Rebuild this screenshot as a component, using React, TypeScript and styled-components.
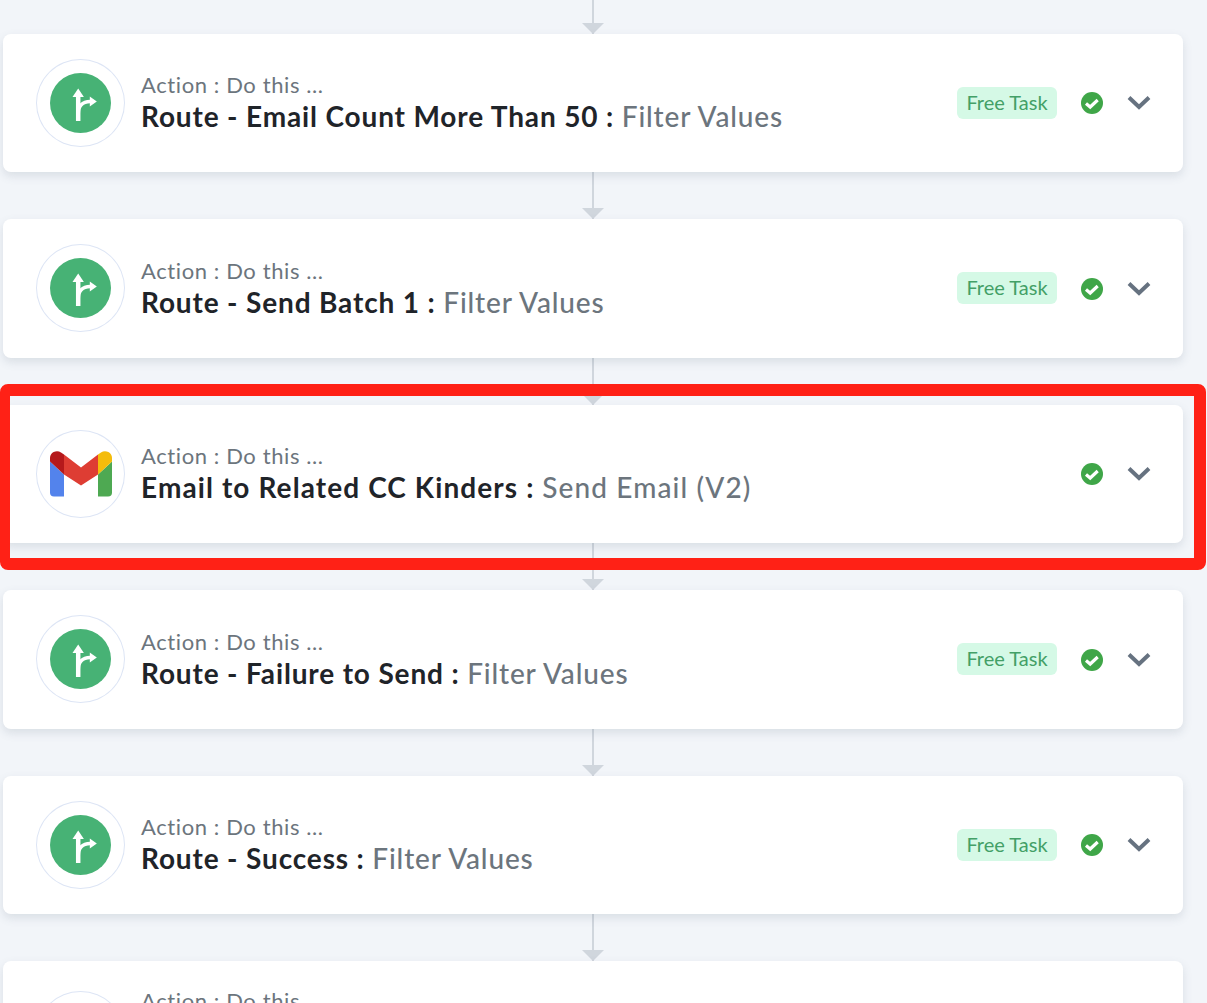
import React from 'react';
import styled, { createGlobalStyle } from 'styled-components';

const GlobalStyle = createGlobalStyle`
    html, body {
        margin: 0;
        padding: 0;
        height: 100%;
        overflow: hidden;
        background-color: #f2f5f9;
        font-family: Lato, "Open Sans", sans-serif;
    }
`;

const Page = styled.div`
    position: relative;
    height: 1003px;
    overflow: hidden;
    padding-left: 3px;
    padding-right: 24px;
`;

const Flow = styled.div`
    display: flex;
    flex-direction: column;
`;

const Connector = styled.div<{ $height: number }>`
    position: relative;
    height: ${(props) => props.$height}px;
    flex: none;

    &::before {
        content: '';
        position: absolute;
        left: 589px;
        top: 0;
        bottom: 0;
        width: 2px;
        background-color: #d0d6dd;
    }

    &::after {
        content: '';
        position: absolute;
        left: 579px;
        bottom: 0;
        border-left: 11px solid transparent;
        border-right: 11px solid transparent;
        border-top: 11px solid #d0d6dd;
    }
`;

const Card = styled.div`
    position: relative;
    z-index: 1;
    flex: none;
    box-sizing: border-box;
    height: 138.5px;
    display: flex;
    align-items: center;
    padding: 0 32px 0 33px;
    background-color: #ffffff;
    border-radius: 8px;
    box-shadow: 0 4px 10px rgba(90, 105, 125, 0.16);
`;

const IconRing = styled.div`
    flex: none;
    box-sizing: border-box;
    width: 89px;
    height: 88px;
    border: 1px solid #dde5f5;
    border-radius: 50%;
    display: flex;
    align-items: center;
    justify-content: center;
`;

const RouteDisc = styled.div`
    width: 61px;
    height: 60px;
    border-radius: 50%;
    background-color: #47b275;
    display: flex;
    align-items: center;
    justify-content: center;
`;

const Text = styled.div`
    flex: 1;
    min-width: 0;
    margin-left: 16px;
    display: flex;
    flex-direction: column;
`;

const Kicker = styled.div`
    font-size: 22px;
    line-height: 27.25px;
    letter-spacing: 0.6px;
    color: #6c757d;
    white-space: nowrap;
`;

const Title = styled.div<{ $wide?: boolean }>`
    font-size: 28px;
    line-height: 36px;
    letter-spacing: ${(props) => props.$wide ? '1.1px' : '0.85px'};
    font-weight: 700;
    color: #1f2429;
    white-space: nowrap;
`;

const Method = styled.span`
    font-weight: 500;
    color: #6c757d;
`;

const Status = styled.div`
    flex: none;
    display: flex;
    align-items: center;
`;

const FreeBadge = styled.div`
    box-sizing: border-box;
    width: 100px;
    height: 32px;
    margin-right: 24px;
    border-radius: 6px;
    background-color: #d5f9e6;
    color: #43a067;
    font-size: 20px;
    line-height: 30px;
    text-align: center;
    white-space: nowrap;
`;

const Check = styled.svg`
    display: block;
    margin-top: 1px;
`;

const Chevron = styled.svg`
    display: block;
    margin-left: 24px;
`;

const RedFrame = styled.div`
    position: absolute;
    z-index: 2;
    left: 0;
    top: 384px;
    width: 1206px;
    height: 186px;
    box-sizing: border-box;
    border: 12px solid #ff2116;
    border-width: 12px 12px 12px 10px;
    border-radius: 8px;
    pointer-events: none;
`;

const RouteIcon = () => (
    <svg width="34" height="36" viewBox="0 0 34 36" fill="none">
        <path d="M14.200 36V10" stroke="#fff" strokeWidth="4.500" />
        <path d="M14.200 3.500L8.500 12h11.400z" fill="#fff" />
        <path d="M14.200 29c0-8 4-12.500 12-12.500" stroke="#fff" strokeWidth="3.500" />
        <path d="M25.800 11.500l7 5-7 5z" fill="#fff" />
    </svg>
);

const GmailIcon = () => (
    <svg width="62" height="47" viewBox="0 0 62 46">
        <path d="M0 11l14 13v22H4a4 4 0 0 1-4-4z" fill="#5383ec" />
        <path d="M48 24l14-13v31a4 4 0 0 1-4 4H48z" fill="#4ea952" />
        <path d="M14 4l17 13L48 4v20L31 35 14 24z" fill="#de3d33" />
        <path d="M0 8a7 7 0 0 1 11-6l3 2v20L0 11z" fill="#b5191b" />
        <path d="M48 4l3-2a7 7 0 0 1 11 6v3L48 24z" fill="#f4bc0b" />
    </svg>
);

const CheckIcon = () => (
    <Check width="22" height="22" viewBox="0 0 22 22">
        <circle cx="11" cy="11" r="11" fill="#3fa648" />
        <path d="M5 11.500l4.200 3.500 7.500-7" fill="none" stroke="#fff" strokeWidth="3.200" />
    </Check>
);

const ChevronIcon = () => (
    <Chevron width="24" height="15" viewBox="0 0 24 15" fill="none">
        <path d="M2 2.500l10 9.500 10-9.500" stroke="#667280" strokeWidth="4" />
    </Chevron>
);

interface StepProps {
    name: string;
    method: string;
    gmail?: boolean;
}

const Step: React.FC<StepProps> = ({ name, method, gmail }) => (
    <Card>
        <IconRing>
            {gmail ? <GmailIcon /> : <RouteDisc><RouteIcon /></RouteDisc>}
        </IconRing>
        <Text>
            <Kicker>Action : Do this ...</Kicker>
            <Title $wide={gmail}>{name} : <Method>{method}</Method></Title>
        </Text>
        <Status>
            {!gmail && <FreeBadge>Free Task</FreeBadge>}
            <CheckIcon />
            <ChevronIcon />
        </Status>
    </Card>
);

// the card under the fold, only its top shows in the shot
const PartialCard = styled(Card)`
    align-items: flex-start;
    padding-top: 30px;
`;

const PartialText = styled(Text)`
    margin-top: -4px;
`;

const steps: StepProps[] = [
    { name: 'Route - Email Count More Than 50', method: 'Filter Values' },
    { name: 'Route - Send Batch 1', method: 'Filter Values' },
    { name: 'Email to Related CC Kinders', method: 'Send Email (V2)', gmail: true },
    { name: 'Route - Failure to Send', method: 'Filter Values' },
    { name: 'Route - Success', method: 'Filter Values' },
];

const App: React.FC = () => (
    <Page>
        <GlobalStyle />
        <Flow>
            <Connector $height={33.6} />
            {steps.map((step) => (
                <React.Fragment key={step.name}>
                    <Step {...step} />
                    <Connector $height={47} />
                </React.Fragment>
            ))}
            <PartialCard>
                <IconRing />
                <PartialText>
                    <Kicker>Action : Do this ...</Kicker>
                </PartialText>
            </PartialCard>
        </Flow>
        <RedFrame />
    </Page>
);

export default App;
